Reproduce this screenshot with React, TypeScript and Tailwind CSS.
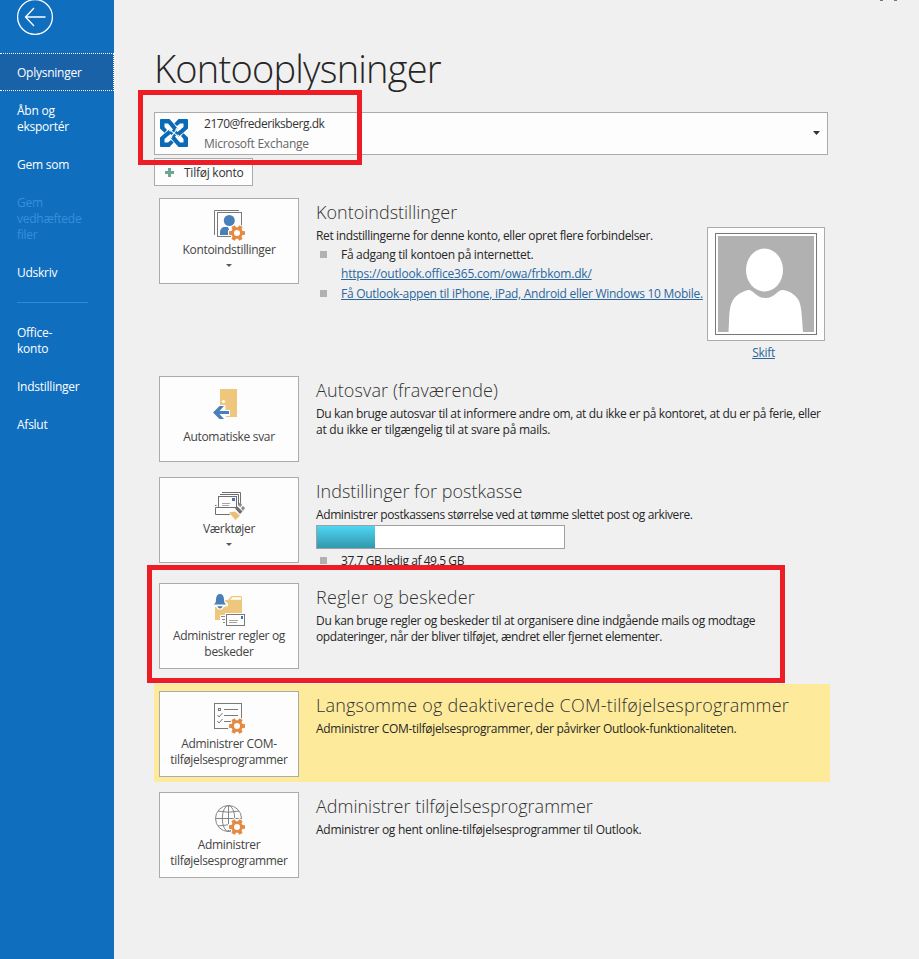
import type { ReactNode } from "react";

const GEAR_TEETH = [0, 60, 120, 180, 240, 300];
const QUARTERS = [0, 90, 180, 270];

function Gear({ cx, cy }: { cx: number; cy: number }) {
  return (
    <g transform={`translate(${cx} ${cy})`}>
      <circle r="7" fill="#fdfdfd" />
      {GEAR_TEETH.map((a) => (
        <g key={a} transform={`rotate(${a + 30})`}>
          <rect x="-2.9" y="-9" width="5.8" height="6" fill="#fdfdfd" />
        </g>
      ))}
      {GEAR_TEETH.map((a) => (
        <path key={a} d="M-1.8 -8h3.6l.5 4h-4.600z" fill="#e58a42" transform={`rotate(${a + 30})`} />
      ))}
      <circle r="4.4" fill="none" stroke="#e58a42" strokeWidth="2.800" />
    </g>
  );
}

function AccountIcon() {
  return (
    <svg width="32" height="32" viewBox="0 0 32 32" fill="none">
      <path d="M1.500 26V1.500H26" stroke="#7a7a7a" />
      <rect x="4.500" y="3.500" width="24" height="24" stroke="#7a7a7a" />
      <circle cx="16.300" cy="11.500" r="5.500" fill="#4a80ba" />
      <path d="M7 26v-2.500c0-3.500 2-5.500 5-5.500h3l3 8z" fill="#4a80ba" />
      <Gear cx={24} cy={24} />
    </svg>
  );
}

function AutoReplyIcon() {
  return (
    <svg width="32" height="32" viewBox="0 0 32 32" fill="none">
      <rect x="7" y="2" width="17" height="28" fill="#eec67c" />
      <circle cx="10.500" cy="14.500" r="1.600" fill="#fdfdfd" />
      <path d="M-.5 25.500 7 18h5.500v5h4.500v6H13v3H7z" fill="#fdfdfd" />
      <path d="M0 25.500 6.500 19h4.500l-4.500 5H16v3H6.500l4.500 5H6.500z" fill="#4a80ba" />
    </svg>
  );
}

function ToolsIcon() {
  return (
    <svg width="32" height="32" viewBox="0 0 32 32" fill="none">
      <path d="M9 4.500h18.500V15M7 6.500h18.500V17" stroke="#6f6f6f" />
      <rect x="5.500" y="8.500" width="18" height="11" fill="#fdfdfd" stroke="#6f6f6f" />
      <rect x="19" y="10" width="3" height="3" fill="#3b78b8" />
      <path d="M9 15.500h8M9 17.500h7" stroke="#a5a5a5" />
      <path d="M3 19.500h16v6.500H3z" fill="#fdfdfd" />
      <path d="M19 26.500H2.500v-7h17M2 17.500h1.500" stroke="#6f6f6f" />
      <path d="m15 24 7-4 6 7-6 6z" fill="#fdfdfd" />
      <path d="m16 24.500 6-1 5 4-4.500 4.500z" fill="#eabf78" />
      <path d="m22 20.500 2.500-2 5 5-2.500 2.500z" fill="#6f6f6f" />
      <path d="m24.500 17 3-3 1.500 3-1.500 2zM28 20l2-2 2 2-2 3z" fill="#8b8b8b" />
    </svg>
  );
}

function RulesIcon() {
  return (
    <svg width="32" height="32" viewBox="0 0 32 32" fill="none">
      <path d="M2 26V6h13l3.500-4H28l1 1v23z" fill="#eec67c" />
      <path d="M17 5.700 19.500 3.200H28v2.500z" fill="#fdfdfd" />
      <path d="M-.5 12V9L2 7V0h10v7l3 2.500V12l-4 1-2 2.500H5L3 13z" fill="#fdfdfd" />
      <path d="M.5 10.500c2-1 2.500-2.500 2.500-5C3 2 4.500 0 7 0s4 2 4 5.500c0 2.500.5 4 2.500 5z" fill="#4a80ba" />
      <path d="M4.500 12.300h5c-.5 3-4.500 3-5 0z" fill="#4a80ba" />
      <path d="M7 21h6v10H9.500v-3H7z" fill="#fdfdfd" />
      <path d="M8 22.500h5M9 25.500h4M10 28.500h3" stroke="#8a8a8a" />
      <path d="M12 19h20v12H12z" fill="#fdfdfd" />
      <rect x="13.500" y="20.500" width="18" height="11" fill="#fdfdfd" stroke="#7a7a7a" />
      <rect x="28" y="22" width="2" height="3" fill="#3b78b8" />
      <path d="M16 26.500h9M16 28.500h8" stroke="#a5a5a5" />
    </svg>
  );
}

function ComIcon() {
  return (
    <svg width="32" height="32" viewBox="0 0 32 32" fill="none">
      <rect x="1.500" y="1.500" width="27" height="25" stroke="#7a7a7a" />
      <rect x="5.500" y="6.500" width="2" height="2" stroke="#7a7a7a" />
      <path d="M11 7.500h14M11 13.500h14M11 19.500h7" stroke="#7a7a7a" />
      <path d="m4.500 13 1.500 2 3.500-4M4.500 19 6 21l3.500-4" stroke="#7a7a7a" />
      <Gear cx={24} cy={24} />
    </svg>
  );
}

function GlobeIcon() {
  return (
    <svg width="32" height="32" viewBox="0 0 32 32" fill="none">
      <g stroke="#858585">
        <circle cx="15.500" cy="15.500" r="13" />
        <ellipse cx="15.500" cy="15.500" rx="6.200" ry="13" />
        <path d="M15.500 2.500v26M2.500 15.500h26M5 8q10.500 2.500 21 0M5 23q10.500-2.500 21 0" />
      </g>
      <Gear cx={24} cy={24} />
    </svg>
  );
}

function ExchangeLogo() {
  return (
    <svg width="28" height="28" viewBox="0 0 28 28" className="-mt-px shrink-0">
      {QUARTERS.map((a) => (
        <g key={a} transform={`rotate(${a} 14 14)`}>
          <path
            d="M0 1Q0 0 1 0H9.500L13.500 4.500 17.500 9.500 14.500 12.500 11 8 8 4.500H4.500V8L7 11 4.500 13.700 0 9.500z"
            fill="#0a6ab6"
          />
        </g>
      ))}
      <path d="m14 9.500 4.500 4.500-4.500 4.500L9.500 14z" fill="#0a6ab6" />
      <path d="M9 11.500q3 .2 5 2.500t5 2.500M16.500 9q-.2 3-2.500 5t-2.500 5" stroke="#fdfdfd" strokeWidth="1.100" fill="none" />
    </svg>
  );
}

function Tile({ icon, label, caret, low }: { icon: ReactNode; label: ReactNode; caret?: boolean; low?: boolean }) {
  const offset = low ? "mt-[10px]" : caret ? "mt-px" : "mt-[2px]";
  return (
    <button className="flex h-[86px] w-[140px] shrink-0 flex-col items-center border border-[#ababab] bg-[#fdfdfd] pt-[10px] text-center text-[12px] leading-4 font-medium tracking-[-0.32px] text-[#444]">
      {icon}
      <span className={`whitespace-nowrap ${offset}`}>{label}</span>
      {caret && (
        <svg width="6" height="3" viewBox="0 0 6 3" className="mt-[6px]">
          <path d="M0 0h6L3 3z" fill="#5a5a5a" />
        </svg>
      )}
    </button>
  );
}

function Section({ tile, title, titleClass = "", children }: { tile: ReactNode; title: string; titleClass?: string; children: ReactNode }) {
  return (
    <section className="flex gap-[17px]">
      {tile}
      <div className="min-w-0 flex-1 text-[12px] leading-4 whitespace-nowrap text-[#262626]">
        <h2 className={`mt-px mb-[3px] text-[18px] leading-[26px] font-light text-[#333] ${titleClass}`}>{title}</h2>
        {children}
      </div>
    </section>
  );
}

function Bullet() {
  return <span className="mr-[14px] mb-[2px] ml-1 h-[7px] w-[7px] shrink-0 bg-[#b1b1b1]" />;
}

function Portrait() {
  return (
    <div className="flex w-[118px] flex-col items-center">
      <div className="h-[114px] w-[118px] border border-[#ababab] bg-[#fdfdfd] px-[7px] py-[5px]">
        <div className="h-[102px] w-[102px] border border-[#777] bg-white p-[2px]">
          <svg width="96" height="96" viewBox="0 0 96 96">
            <path d="M0 0h96v96H0z" fill="#b1b1b1" />
            <ellipse cx="46.500" cy="34" rx="18.500" ry="21.500" fill="#fff" />
            <path d="M10.500 96c1-13 0-24 4-31 3-6 9-9 15.500-11 5-1 8 8 17.500 8S60 53 65 54c7 1 13 5 16 11 3 7 3 19 4 31z" fill="#fff" />
          </svg>
        </div>
      </div>
      <a className="mt-1 mr-[5px] text-[12px] leading-4 tracking-[-0.3px] text-[#2b679f] underline">Skift</a>
    </div>
  );
}

function Sidebar() {
  return (
    <nav className="h-[959px] w-[114px] shrink-0 overflow-hidden bg-[#106ebe] text-[12px] leading-4 tracking-[-0.25px] text-white">
      <svg width="38" height="38" viewBox="0 0 38 38" className="-mt-[2px] ml-4" fill="none" stroke="#fff">
        <circle cx="19" cy="19" r="17.400" strokeWidth="1.300" />
        <path d="M29.500 19H10M18 10l-8.500 9 8.500 9" strokeWidth="1.300" />
      </svg>
      <div className="mt-[17px] flex h-[38px] items-center border border-l-0 border-dotted border-white bg-[#1a62a8] pt-px pl-[17px]">Oplysninger</div>
      <div className="flex flex-col pl-[17px]">
        <span className="mt-3">Åbn og<br />eksportér</span>
        <span className="mt-[22px]">Gem som</span>
        <span className="mt-[22px] text-[#3590dc]">Gem<br />vedhæftede<br />filer</span>
        <span className="mt-[22px]">Udskriv</span>
        <span className="mt-[21px] h-px w-[71px] bg-[#2f8ad6]" />
        <span className="mt-[22px]">Office-<br />konto</span>
        <span className="mt-[22px]">Indstillinger</span>
        <span className="mt-[22px]">Afslut</span>
      </div>
    </nav>
  );
}

export default function App() {
  return (
    <div className="relative flex h-[959px] w-[919px] overflow-hidden bg-[#f0f0f0] font-['Open_Sans','Noto_Sans',sans-serif]">
      <Sidebar />
      <main className="w-[805px] pl-10">
        <h1 className="mt-10 h-[72px] text-[38px] leading-[56px] font-light tracking-[-0.78px] whitespace-nowrap text-[#262626]">Kontooplysninger</h1>
        <div className="flex h-[43px] w-[674px] items-center border border-[#ababab] bg-[#fdfdfd] pr-[7px] pl-[5px]">
          <ExchangeLogo />
          <div className="ml-4 flex-1 text-[12px] leading-5 text-[#333]">
            <div className="tracking-[-0.47px]">2170@frederiksberg.dk</div>
            <div className="tracking-[-0.26px] text-[#666]">Microsoft Exchange</div>
          </div>
          <svg width="7" height="4" viewBox="0 0 7 4" className="-mt-[2px]">
            <path d="M0 0h7L3.500 4z" fill="#333" />
          </svg>
        </div>
        <button className="mt-[3px] flex h-7 w-[99px] items-center border border-[#ababab] bg-[#fdfdfd] pl-[10px] text-[12px] tracking-[-0.25px] text-[#333]">
          <svg width="9" height="9" viewBox="0 0 9 9" className="mr-[10px]">
            <path d="M3 0h3v3h3v3H6v3H3V6H0V3h3z" fill="#6ba792" />
          </svg>
          <span className="pt-px">Tilføj konto</span>
        </button>

        <div className="mt-3 flex h-[178px] pl-[5px]">
          <div className="w-[548px]">
            <Section tile={<Tile icon={<AccountIcon />} label="Kontoindstillinger" caret />} title="Kontoindstillinger">
              <p className="tracking-[-0.37px]">Ret indstillingerne for denne konto, eller opret flere forbindelser.</p>
              <div className="mt-[3px] flex items-center tracking-[-0.3px]"><Bullet />Få adgang til kontoen på internettet.</div>
              <a className="mt-[3px] ml-[25px] block tracking-[-0.2px] text-[#2b679f] underline">https://outlook.office365.com/owa/frbkom.dk/</a>
              <div className="mt-1 flex items-center tracking-[-0.27px]"><Bullet /><a className="text-[#2b679f] underline">Få Outlook-appen til iPhone, iPad, Android eller Windows 10 Mobile.</a></div>
            </Section>
          </div>
          <div className="pt-[29px]"><Portrait /></div>
        </div>

        <div className="h-[101px] pl-[5px]">
          <Section tile={<Tile icon={<AutoReplyIcon />} label="Automatiske svar" low />} title="Autosvar (fraværende)" titleClass="tracking-[0.13px]">
            <p className="tracking-[-0.37px]">Du kan bruge autosvar til at informere andre om, at du ikke er på kontoret, at du er på ferie, eller</p>
            <p className="tracking-[-0.25px]">at du ikke er tilgængelig til at svare på mails.</p>
          </Section>
        </div>

        <div className="h-[106px] pl-[5px]">
          <Section tile={<Tile icon={<ToolsIcon />} label="Værktøjer" caret />} title="Indstillinger for postkasse">
            <p className="tracking-[-0.4px]">Administrer postkassens størrelse ved at tømme slettet post og arkivere.</p>
            <div className="mt-[2px] h-6 w-[249px] border border-[#a0a0a0] bg-white">
              <div className="h-full w-[58px] bg-linear-to-b from-[#4fd6f2] to-[#3199ae]" />
            </div>
            <div className="mt-1 flex items-center tracking-[-0.43px]"><Bullet />37,7 GB ledig af 49,5 GB</div>
          </Section>
        </div>

        <div className="h-[101px] pl-[5px]">
          <Section tile={<Tile icon={<RulesIcon />} label={<>Administrer regler og<br />beskeder</>} />} title="Regler og beskeder" titleClass="tracking-[0.2px]">
            <p className="tracking-[-0.33px]">Du kan bruge regler og beskeder til at organisere dine indgående mails og modtage</p>
            <p className="tracking-[-0.37px]">opdateringer, når der bliver tilføjet, ændret eller fjernet elementer.</p>
          </Section>
        </div>

        <div className="h-[98px] w-[676px] bg-[#fdeb9b] pt-[7px] pl-[5px]">
          <Section tile={<Tile icon={<ComIcon />} label={<>Administrer COM-<br />tilføjelsesprogrammer</>} />} title="Langsomme og deaktiverede COM-tilføjelsesprogrammer" titleClass="tracking-[0.22px]">
            <p className="tracking-[-0.29px]">Administrer COM-tilføjelsesprogrammer, der påvirker Outlook-funktionaliteten.</p>
          </Section>
        </div>

        <div className="pt-[10px] pl-[5px]">
          <Section tile={<Tile icon={<GlobeIcon />} label={<>Administrer<br />tilføjelsesprogrammer</>} />} title="Administrer tilføjelsesprogrammer">
            <p className="tracking-[-0.27px]">Administrer og hent online-tilføjelsesprogrammer til Outlook.</p>
          </Section>
        </div>
      </main>

      <div className="pointer-events-none absolute top-[90px] left-[138px] h-[75px] w-[224px] border-[5px] border-[#ee1c25]" />
      <div className="pointer-events-none absolute top-[565px] left-[147px] h-[118px] w-[638px] border-[5px] border-[#ee1c25]" />
      <div className="absolute top-0 left-[880px] h-px w-[3px] bg-[#777]" />
      <div className="absolute top-0 left-[894px] h-px w-[3px] bg-[#777]" />
    </div>
  );
}
